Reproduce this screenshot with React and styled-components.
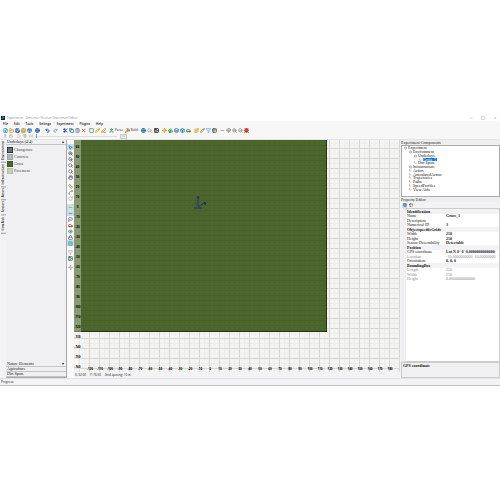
import React from 'react'
import styled, { createGlobalStyle } from 'styled-components'
import {
    FilePlus, FolderOpen, Save, SaveAll, Package, Globe, Undo2, Redo2, Scissors, Copy, ClipboardPaste,
    X, Square, Pencil, PenLine, User, Hammer, Image, Search, Play, Pause, SkipForward, Hand, ZoomIn,
    ZoomOut, MousePointer2, Layers, Box, Car, Trees, Sun, Filter, Table2, Magnet, Bug, Minus,
    Ruler, RotateCw, Eye, Lock, Route, Flag, Grid3x3, Waypoints, Spline
} from 'lucide-react'

const GlobalStyle = createGlobalStyle`
    body {
        margin: 0;
        background: #fff;
        color: #333;
        font-family: "Open Sans", sans-serif;
        font-size: 3px;
        line-height: 4px;
    }

    * {
        box-sizing: border-box;
    }

    button, input {
        font: inherit;
        color: inherit;
        margin: 0;
        padding: 0;
        border: 0;
        background: none;
    }

    h2, ul {
        margin: 0;
        padding: 0;
        font-size: inherit;
        font-weight: inherit;
        list-style: none;
    }
`

const Page = styled.div`
    padding-top: 114px;
`

const Window = styled.div`
    background: #f3f3f5;
    border-bottom: 1px solid #bfbfc4;
`

const TitleBar = styled.header`
    display: flex;
    align-items: center;
    gap: 2px;
    height: 7px;
    padding: 0 3px 0 1px;
    background: #fff;
    color: #8c9096;
`

const Logo = styled.svg`
    width: 4px;
    height: 4px;
`

const WindowButtons = styled.div`
    display: flex;
    gap: 8px;
    margin-left: auto;
    color: #999;

    button {
        display: flex;
    }
`

const Menu = styled.nav`
    display: flex;
    align-items: center;
    gap: 6px;
    height: 6px;
    padding-left: 3px;
    background: #f7f7f8;
    color: #111;
    font-weight: 600;
`

const Toolbar = styled.div`
    display: flex;
    align-items: center;
    gap: 1px;
    height: 6px;
    padding-left: 3px;
    background: #f7f7f8;
`

const Playback = styled(Toolbar)`
    height: 7px;
    border-bottom: 1px solid #e4e4e6;
    color: #888;
`

const ToolButton = styled.button`
    display: flex;
    align-items: center;
    flex: none;
    gap: 1px;
    min-width: 5px;
    height: 5px;
    margin-left: ${props => props.$gap || 0}px;
    color: ${props => props.$color};

    span {
        color: #222;
    }
`

const Timeline = styled.input`
    appearance: none;
    width: 82px;
    height: 1px;
    background: #ddd;

    &::-webkit-slider-thumb {
        appearance: none;
        width: 1px;
        height: 4px;
        background: #999;
    }
`

const Speed = styled.input`
    width: 7px;
    height: 5px;
    margin-left: 2px;
    border: 1px solid #ccc;
    background: #eee;
    color: #888;
`

const Main = styled.main`
    display: flex;
`

const SideTabs = styled.div`
    display: flex;
    flex: none;
    width: 6px;
    padding-top: 1px;
    gap: 1px;
    flex-direction: column;
    align-items: center;

    button {
        writing-mode: vertical-rl;
        transform: rotate(180deg);
        padding-top: 2px;
        line-height: 5px;
        border-top: 1px solid #999;
        color: #111;
        font-weight: 600;
    }
`

const Palette = styled.section`
    display: flex;
    flex-direction: column;
    flex: none;
    width: 61px;
    border-right: 1px solid #aaa;
    border-bottom: 1px solid #aaa;
    background: #f0f0f2;
    font-family: "Liberation Serif", serif;
    font-size: 4px;
`

const PaletteHead = styled.button`
    display: flex;
    justify-content: space-between;
    align-items: center;
    height: 5px;
    padding: 0 2px 0 1px;
    border-bottom: 1px solid #c4c4c8;
    color: #111;
    text-align: left;
`

const PaletteItems = styled.ul`
    flex: 1;
    padding-top: 1px;
`

const Item = styled.li`
    display: flex;
    align-items: center;
    gap: 1px;
    height: 7px;
    padding-left: 1px;
    color: #444;
`

const Swatch = styled.span`
    width: 6px;
    height: 6px;
    border: 1px solid ${props => props.$edge};
    background: ${props => props.$fill};
`

const ToolStrip = styled.div`
    display: flex;
    flex-direction: column;
    align-items: center;
    flex: none;
    width: 7px;
    padding-top: 4px;
    background: #fafafa;
`

const StripButton = styled.button`
    display: flex;
    align-items: center;
    justify-content: center;
    width: ${props => props.$small ? 5 : 7}px;
    height: ${props => props.$small ? 5 : 6}px;
    margin-top: ${props => props.$gap || 0}px;
    background: ${props => props.$on ? '#c3e2ee' : 'none'};
    color: ${props => props.$color || '#556'};
`

const Viewport = styled.section`
    flex: 1;
    min-width: 0;
`

const Canvas = styled.div`
    display: grid;
    grid-template: minmax(0, 1fr) / minmax(0, 1fr);
    overflow: hidden;
    background-color: #f4f4f3;
    background-image:
        linear-gradient(90deg, #d6d6d6 1px, transparent 1px),
        linear-gradient(#d6d6d6 1px, transparent 1px),
        linear-gradient(90deg, #ededec 1px, transparent 1px),
        linear-gradient(#ededec 1px, transparent 1px);
    background-size: 10px 10px, 10px 10px, 5px 5px, 5px 5px;
    background-position: 5px 8px;

    > * {
        grid-area: 1 / 1;
    }
`

const Field = styled.div`
    display: grid;
    place-items: center;
    width: 253px;
    height: 192px;
    padding-bottom: 66px;
    border-right: 1px solid #243612;
    border-bottom: 1px solid #243612;
    background-color: #4c662d;
    background-image:
        linear-gradient(90deg, #49632a 1px, transparent 1px),
        linear-gradient(#476129 1px, transparent 1px);
    background-size: 5px 5px;
`

const YRuler = styled.ul`
    width: 7px;
    padding-top: 2px;
    background: rgba(255, 255, 255, 0.35);
    color: #000;
    font-weight: bold;
    text-align: center;

    li {
        height: 10px;
        line-height: 10px;
    }
`

const XRuler = styled.ul`
    display: flex;
    align-self: end;
    padding-left: 11px;
    color: #000;
    font-weight: bold;
    line-height: 6px;
    text-align: center;

    li {
        flex: none;
        width: 10px;
    }
`

const Coordinates = styled.div`
    display: flex;
    gap: 4px;
    height: 6px;
    padding: 1px 0 0 1px;
    color: #111;
`

const RightDock = styled.aside`
    display: flex;
    flex-direction: column;
    flex: none;
    width: 20%;
    padding-left: 1px;
    font-family: "Liberation Serif", serif;
    font-size: 4px;
`

const PanelTitle = styled.h2`
    height: 5px;
    line-height: 5px;
    color: #222;
    background: #eeeef0;
`

const Tree = styled.ul`
    height: 52px;
    border: 1px solid #aaa;
    background: #fff;
`

const Node = styled.li`
    display: flex;
    gap: 1px;
    height: 4px;
    padding-left: ${props => 2 + props.$depth * 5}px;
    line-height: 4px;

    &:nth-child(4n) {
        height: 3px;
        line-height: 3px;
    }

    svg {
        flex: none;
        width: 3px;
        height: 4px;
        color: #888;
    }

    span {
        padding-right: 1px;
        background: ${props => props.$selected ? '#0078d7' : 'none'};
        color: ${props => props.$selected ? '#fff' : '#111'};
    }
`

const EditorBar = styled.div`
    display: flex;
    align-items: center;
    gap: 1px;
    height: 6px;
    padding-left: 1px;
`

const Properties = styled.div`
    flex: 1;
    overflow: hidden;
    border: 1px solid #ccc;
    border-left: 5px solid #f0f0f2;
    background: #fff;
`

const PropertyTable = styled.table`
    width: 100%;
    border-collapse: collapse;
    table-layout: fixed;
    line-height: 4px;

    tr {
        height: 5px;
    }

    tr:nth-child(even) {
        height: 4px;
    }

    th, td {
        padding: 0 0 0 1px;
        font-weight: normal;
        text-align: left;
        white-space: nowrap;
    }
`

const NameColumn = styled.col`
    width: 42%;
`

const Property = styled.tr`
    && th, && td {
        color: ${props => props.$dim ? '#888' : '#111'};
    }

    && td {
        font-weight: ${props => props.$dim ? 'normal' : 'bold'};
    }

    && th[colspan] {
        background: #f3f3f5;
        font-weight: bold;
    }
`

const HelpBox = styled.div`
    height: 16px;
    padding: 1px;
    border: 1px solid #ccc;
    background: #f0f0f2;
    color: #111;
    font-weight: bold;
`

const StatusBar = styled.footer`
    height: 7px;
    padding: 1px;
    border-top: 1px solid #e2e2e6;
    color: #111;
`

const menus = ['File', 'Edit', 'Tools', 'Settings', 'Experiment', 'Plugins', 'Help']

const tools = [
    ['New', FilePlus, '#3a9bc0'],
    ['Open', FolderOpen, '#d9a520'],
    ['Save', Save, '#2c62a8'],
    ['Save all', SaveAll, '#c89a28'],
    ['Package', Package, '#2f6dae'],
    ['Web', Globe, '#2860a8', 2],
    ['Undo', Undo2, '#234f9c', 4],
    ['Redo', Redo2, '#8a94a4', 2],
    ['Cut', Scissors, '#1f3a88', 4],
    ['Copy', Copy, '#3d7fa0'],
    ['Paste', ClipboardPaste, '#789'],
    ['Delete', X, '#c23c30'],
    ['Select', Square, '#6a9a80', 2],
    ['Draw', Pencil, '#d0a810'],
    ['Line', PenLine, '#c09020']
]

const sceneTools = [
    ['Globe', Globe, '#1f6f94', 2],
    ['Find', Search, '#aaa'],
    ['Render', Image, '#222', 1],
    ['Sky', Sun, '#c8a820', 2],
    ['Trees', Trees, '#3a8a38'],
    ['Layers', Layers, '#3a72b0'],
    ['Box', Box, '#2585b8'],
    ['Cars', Car, '#41793f'],
    ['Route', Route, '#d0b030', 2],
    ['Edit path', Pencil, '#c88438'],
    ['Filter', Filter, '#60b4d8'],
    ['Table', Table2, '#666'],
    ['Minimise', Minus, '#999', 2],
    ['Snap', Magnet, '#888'],
    ['Zoom in', ZoomIn, '#999'],
    ['Zoom out', ZoomOut, '#999'],
    ['Debug', Bug, '#c02020']
]

const stripTools = [
    ['Pointer', MousePointer2, '#478', 0, true],
    ['Zoom in', ZoomIn],
    ['Zoom out', ZoomOut],
    ['Zoom fit', Search],
    ['Zoom area', Search],
    ['Pan', Hand],
    ['Ruler', Ruler, '#7a8c30', 3],
    ['Spline', Spline, '#889'],
    ['Rotate', RotateCw, '#aaa'],
    ['Roads', Minus, '#d08a20', 3, true],
    ['Lanes', Minus, '#c84a30', 0, true],
    ['Flags', Flag, '#3450b0'],
    ['Cars', Car, '#a02818'],
    ['View', Eye, '#28789a'],
    ['Lock', Lock],
    ['Grid', Grid3x3, '#6aa', 0, true],
    ['Filter', Filter, '#aaa', 3],
    ['Image', Image, '#253'],
    ['Waypoints', Waypoints, '#aaa', 3]
]

const swatches = [
    ['Changeface', '#687078', '#30363c'],
    ['Concrete', '#b4b8bc', '#a0a4a8'],
    ['Grass', '#49682a', '#3c5a20'],
    ['Pavement', '#c6d0b4', '#b2c09c']
]

const nodes = [
    ['Experiment', 0, true],
    ['Environment', 1, true],
    ['Underlays', 2, true],
    ['Grass_1', 3],
    ['Dirt Spots', 2],
    ['Infrastructure', 1, true],
    ['Actors', 1],
    ['ArticulatedActors', 1],
    ['Trajectories', 1],
    ['Paths', 1],
    ['SpeedProfiles', 1],
    ['View Aids', 1]
]

const properties = [
    ['Identification'],
    ['Name', 'Grass_1'],
    ['Description', ''],
    ['Numerical ID', '3'],
    ['ObjectspecificGrids'],
    ['Width', '250'],
    ['Height', '250'],
    ['Sensor Detectability', 'Detectable'],
    ['Position'],
    ['GPS coordinate', 'Lat  N 0° 0\' 0.0000000000000'],
    ['Location', '-10.0000000000, 10.00000000', true],
    ['Orientation', '0, 0, 0'],
    ['BoundingBox'],
    ['Length', '250', true],
    ['Width', '250', true],
    ['Height', '0.0000000000000', true]
]

const range = (count, first, step) => Array.from({ length: count }, (_, i) => first + i * step)

function Axes() {
    return (
        <svg width="16" height="18" viewBox="0 0 16 18" fill="none" stroke="#22336a">
            <path d="M6 13V3M6 13l6-4M2 14h8" />
            <path d="M5 4l1-2 1 2zM12 8l2 1-1 2z" fill="#1c2c58" />
            <path d="M3 8l3 5" stroke="#33507a" />
        </svg>
    )
}

function Tools({ list }) {
    return list.map(([name, Icon, color, gap]) => (
        <ToolButton key={name} aria-label={name} $color={color} $gap={gap}>
            <Icon size={5} strokeWidth={4} />
        </ToolButton>
    ))
}

export default function App() {
    return (
        <Page>
            <GlobalStyle />
            <Window>
                <TitleBar>
                    <Logo viewBox="0 0 8 8">
                        <rect width="8" height="8" fill="#0e2a3a" />
                        <path d="M2 2h4v2H3v2" stroke="#49b8c8" fill="none" />
                    </Logo>
                    <span>Experiment - Simcenter Prescan Experiment Editor</span>
                    <WindowButtons>
                        <button aria-label="Minimize"><Minus size={4} /></button>
                        <button aria-label="Maximize"><Square size={4} /></button>
                        <button aria-label="Close"><X size={4} /></button>
                    </WindowButtons>
                </TitleBar>
                <Menu>
                    {menus.map(name => <button key={name}>{name}</button>)}
                </Menu>
                <Toolbar>
                    <Tools list={tools} />
                    <ToolButton $color="#2a8a50" $gap={2}><User size={5} strokeWidth={4} /><span>Parse</span></ToolButton>
                    <ToolButton $color="#b05a28" $gap={1}><Hammer size={5} strokeWidth={4} /><span>Build</span></ToolButton>
                    <Tools list={sceneTools} />
                </Toolbar>
                <Playback>
                    <ToolButton aria-label="Record"><User size={4} /></ToolButton>
                    <ToolButton aria-label="Stop"><Lock size={4} /></ToolButton>
                    <ToolButton aria-label="Play" $gap={2}><Play size={4} /></ToolButton>
                    <ToolButton aria-label="Pause"><Pause size={4} /></ToolButton>
                    <ToolButton aria-label="Step"><SkipForward size={4} /></ToolButton>
                    <Timeline type="range" aria-label="Timeline" defaultValue="1" />
                    <Speed aria-label="Speed" defaultValue="1.0" />
                </Playback>
                <Main>
                    <SideTabs>
                        {['Environment', 'Infrastructure', 'Actors', 'Sensors', 'View Aids'].map(name => (
                            <button key={name}>{name}</button>
                        ))}
                    </SideTabs>
                    <Palette>
                        <PaletteHead>Underlays (4/4)<span>▴</span></PaletteHead>
                        <PaletteItems>
                            {swatches.map(([name, fill, edge]) => (
                                <Item key={name}><Swatch $fill={fill} $edge={edge} />{name}</Item>
                            ))}
                        </PaletteItems>
                        <PaletteHead>Nature Elements<span>▾</span></PaletteHead>
                        <PaletteHead>Agriculture</PaletteHead>
                        <PaletteHead>Dirt Spots</PaletteHead>
                    </Palette>
                    <ToolStrip>
                        {stripTools.map(([name, Icon, color, gap, on]) => (
                            <StripButton key={name} aria-label={name} $color={color} $gap={gap} $on={on}>
                                <Icon size={5} strokeWidth={3} />
                            </StripButton>
                        ))}
                    </ToolStrip>
                    <Viewport>
                        <Canvas>
                            <Field><Axes /></Field>
                            <YRuler>
                                {range(23, 60, -10).map(n => <li key={n}>{n}</li>)}
                            </YRuler>
                            <XRuler>
                                {range(31, -120, 10).map(n => <li key={n}>{n}</li>)}
                            </XRuler>
                        </Canvas>
                        <Coordinates>
                            <span>X: 32.00</span>
                            <span>Y: 76.50</span>
                            <span>Grid spacing: 10 m</span>
                        </Coordinates>
                    </Viewport>
                    <RightDock>
                        <PanelTitle>Experiment Components</PanelTitle>
                        <Tree>
                            {nodes.map(([name, depth, open]) => (
                                <Node key={name} $depth={depth} $selected={name === 'Grass_1'}>
                                    <svg viewBox="0 0 6 8" fill="none" stroke="currentColor">
                                        {open ? <path d="M1 2h4v4h-4zM2 4h2" /> : <path d="M1 0v4h4" />}
                                    </svg>
                                    <span>{name}</span>
                                </Node>
                            ))}
                        </Tree>
                        <PanelTitle>Property Editor</PanelTitle>
                        <EditorBar>
                            <StripButton aria-label="Categorized" $small $on $color="#357"><Grid3x3 size={4} /></StripButton>
                            <StripButton aria-label="Alphabetical" $small><Table2 size={4} /></StripButton>
                        </EditorBar>
                        <Properties>
                            <PropertyTable>
                                <colgroup><NameColumn /><col /></colgroup>
                                <tbody>
                                    {properties.map(([name, value, dim], i) => (
                                        <Property key={i} $dim={dim}>
                                            {value === undefined
                                                ? <th colSpan="2">{name}</th>
                                                : <><th scope="row">{name}</th><td>{value}</td></>}
                                        </Property>
                                    ))}
                                </tbody>
                            </PropertyTable>
                        </Properties>
                        <HelpBox>GPS coordinate</HelpBox>
                    </RightDock>
                </Main>
                <StatusBar>Progress:</StatusBar>
            </Window>
        </Page>
    )
}
